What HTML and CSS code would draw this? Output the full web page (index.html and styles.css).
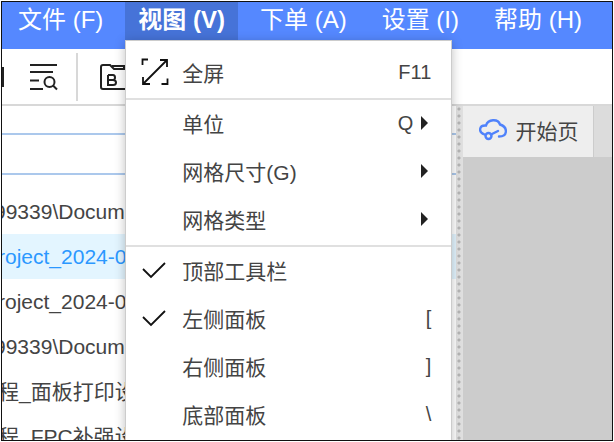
FILE: index.html
```
<!DOCTYPE html>
<html lang="zh-CN">
<head>
<meta charset="utf-8">
<title>视图</title>
<link rel="stylesheet" href="styles.css">
</head>
<body>
<div class="window">
  <nav class="menubar">
    <div class="menu"><button class="menu-title">文件 (F)</button></div>
    <div class="menu">
      <button class="menu-title open">视图 (V)</button>
      <div class="dropdown">
        <button class="item">
          <svg class="mark" viewBox="0 0 28 28" fill="none" stroke="#111" stroke-width="1.8"><path d="M1.5 7V1.5H7M26.500 20.500V26H20.500M2 26L26 2M19 2H26V9M2 19V26H9"/></svg>
          <span class="label">全屏</span><span class="key">F11</span>
        </button>
        <hr>
        <button class="item"><span class="mark"></span><span class="label">单位</span><span class="key">Q</span><span class="arrow"></span></button>
        <button class="item"><span class="mark"></span><span class="label">网格尺寸(G)</span><span class="arrow"></span></button>
        <button class="item"><span class="mark"></span><span class="label">网格类型</span><span class="arrow"></span></button>
        <hr>
        <button class="item">
          <svg class="mark" viewBox="0 0 28 28" fill="none" stroke="#111" stroke-width="1.8"><path d="M2 13L10 21L24 7"/></svg>
          <span class="label">顶部工具栏</span>
        </button>
        <button class="item">
          <svg class="mark" viewBox="0 0 28 28" fill="none" stroke="#111" stroke-width="1.8"><path d="M2 13L10 21L24 7"/></svg>
          <span class="label">左侧面板</span><span class="key">[</span>
        </button>
        <button class="item"><span class="mark"></span><span class="label">右侧面板</span><span class="key">]</span></button>
        <button class="item"><span class="mark"></span><span class="label">底部面板</span><span class="key">\</span></button>
      </div>
    </div>
    <div class="menu"><button class="menu-title">下单 (A)</button></div>
    <div class="menu"><button class="menu-title">设置 (I)</button></div>
    <div class="menu"><button class="menu-title">帮助 (H)</button></div>
  </nav>

  <div class="toolbar">
    <span class="edge"></span>
    <button class="tool" aria-label="查找">
      <svg width="28" height="28" viewBox="0 0 28 28" fill="none" stroke="#222" stroke-width="2"><path d="M0 2H27M0 9H23M0 17.500H9M0 26H13"/><circle cx="19.500" cy="19" r="5"/><path d="M23 22.500L27 26.500"/></svg>
    </button>
    <span class="divider"></span>
    <button class="tool" aria-label="BOM">
      <svg width="28" height="28" viewBox="0 0 28 28" fill="none" stroke="#222" stroke-width="2"><path d="M1 24V4Q1 2 3 2H10L14 6H25Q27 6 27 8V24Q27 26 25 26H3Q1 26 1 24ZM12 3H24V6M8 12V22H13Q16 22 16 19.500Q16 17 13 17H8M13 17Q15 17 15 14.500Q15 12 13 12H8"/></svg>
    </button>
  </div>

  <main class="workspace">
    <section class="panel">
      <input class="search" type="text" aria-label="搜索">
      <ul class="tree">
        <li class="path">99339\Docum</li>
        <li class="selected">roject_2024-0</li>
        <li>roject_2024-0</li>
        <li class="path">99339\Docum</li>
        <li>程_面板打印设</li>
        <li>程_FPC补强设</li>
      </ul>
    </section>
    <div class="splitter"></div>
    <section class="editor">
      <div class="tabs">
        <button class="tab">
          <svg width="28" height="22" viewBox="0 0 28 22" fill="none" stroke="#4f82fb" stroke-width="2.400" stroke-linecap="round"><path d="M5.500 15.500C-1 13 0 6 7 6.500C9 0 19-.5 21 5.500C29 8 29 17.500 20 17.500M12 15.500L19 12"/><circle cx="9.500" cy="17" r="3"/></svg>
          <span>开始页</span>
        </button>
      </div>
    </section>
  </main>
</div>
</body>
</html>
```
FILE: styles.css
```
* {
  box-sizing: border-box;
}

body {
  margin: 0;
  padding: 1px;
  height: 100vh;
  background: #fff;
  color: #444;
  font-family: "Liberation Sans", "Noto Sans CJK SC", sans-serif;
  font-size: 21px;
}

button {
  border: 0;
  padding: 0;
  background: none;
  color: inherit;
  font: inherit;
}

.window {
  display: flex;
  flex-direction: column;
  height: 100%;
  border: 1px solid #111;
  overflow: hidden;
}

.menubar {
  display: flex;
  flex: none;
  align-items: flex-start;
  gap: 9px;
  height: 47px;
  padding-left: 3px;
  background: #5588ff;
}

.menu {
  position: relative;
}

.menu-title {
  height: 38px;
  padding: 0 13px 2px;
  color: #fff;
  font-size: 24px;
  line-height: 36px;
  white-space: nowrap;
}

.menu-title.open {
  background: #4673d8;
  font-weight: bold;
}

.dropdown {
  position: absolute;
  z-index: 1;
  top: 100%;
  left: 0;
  min-width: 327px;
  padding: 8px 0;
  border: 1px solid #ccc;
  background: #fff;
  box-shadow: 0 2px 10px rgba(0, 0, 0, 0.25);
}

.dropdown hr {
  height: 2px;
  margin: 1px 0 0;
  border: 0;
  background: #e0e0e0;
}

.item {
  display: flex;
  align-items: center;
  width: 100%;
  height: 48px;
  padding: 0 20px 2px 15px;
  text-align: left;
}

.mark {
  width: 28px;
  height: 28px;
  margin-right: 13px;
}

.label {
  flex: 1;
}

.key {
  font-size: 20px;
}

.arrow {
  margin: 0 3px 0 8px;
  border-left: 7px solid #222;
  border-top: 7px solid transparent;
  border-bottom: 7px solid transparent;
}

.toolbar {
  display: flex;
  flex: none;
  align-items: center;
  height: 57px;
  border-bottom: 2px solid #d8d8d8;
}

.edge {
  width: 2px;
  height: 20px;
  margin-right: 26px;
  background: #222;
}

.tool {
  display: flex;
}

.divider {
  width: 2px;
  height: 48px;
  margin: 0 22px 0 18px;
  background: #d8d8d8;
}

.workspace {
  display: grid;
  flex: 1;
  grid-template-columns: 1fr 7px 24.5%;
  min-height: 0;
}

.panel {
  min-width: 0;
  padding-top: 27px;
  overflow: hidden;
}

.search {
  display: block;
  width: 100%;
  height: 42px;
  border: solid #abc8ec;
  border-width: 2px 0;
  border-radius: 0;
  font: inherit;
}

.tree {
  margin: 14px 0 0;
  padding: 0;
  list-style: none;
}

.tree li {
  height: 45px;
  line-height: 45px;
  text-indent: -4px;
  white-space: nowrap;
}

.tree .path {
  text-indent: -8px;
}

.tree .selected {
  background: #e3f5ff;
  color: #2b98ff;
}

.splitter {
  background: radial-gradient(circle at 3px 3px, #b4b4b4 1px, transparent 2px) 0 0 / 7px 7px #e0e0e0;
}

.editor {
  background: #ccc;
}

.tabs {
  display: flex;
  height: 51px;
  background: #dcdcdc;
}

.tab {
  display: flex;
  align-items: center;
  gap: 9px;
  padding: 0 14px 3px 16px;
  border-right: 1px solid #ccc;
  background: #eee;
  white-space: nowrap;
}
```
